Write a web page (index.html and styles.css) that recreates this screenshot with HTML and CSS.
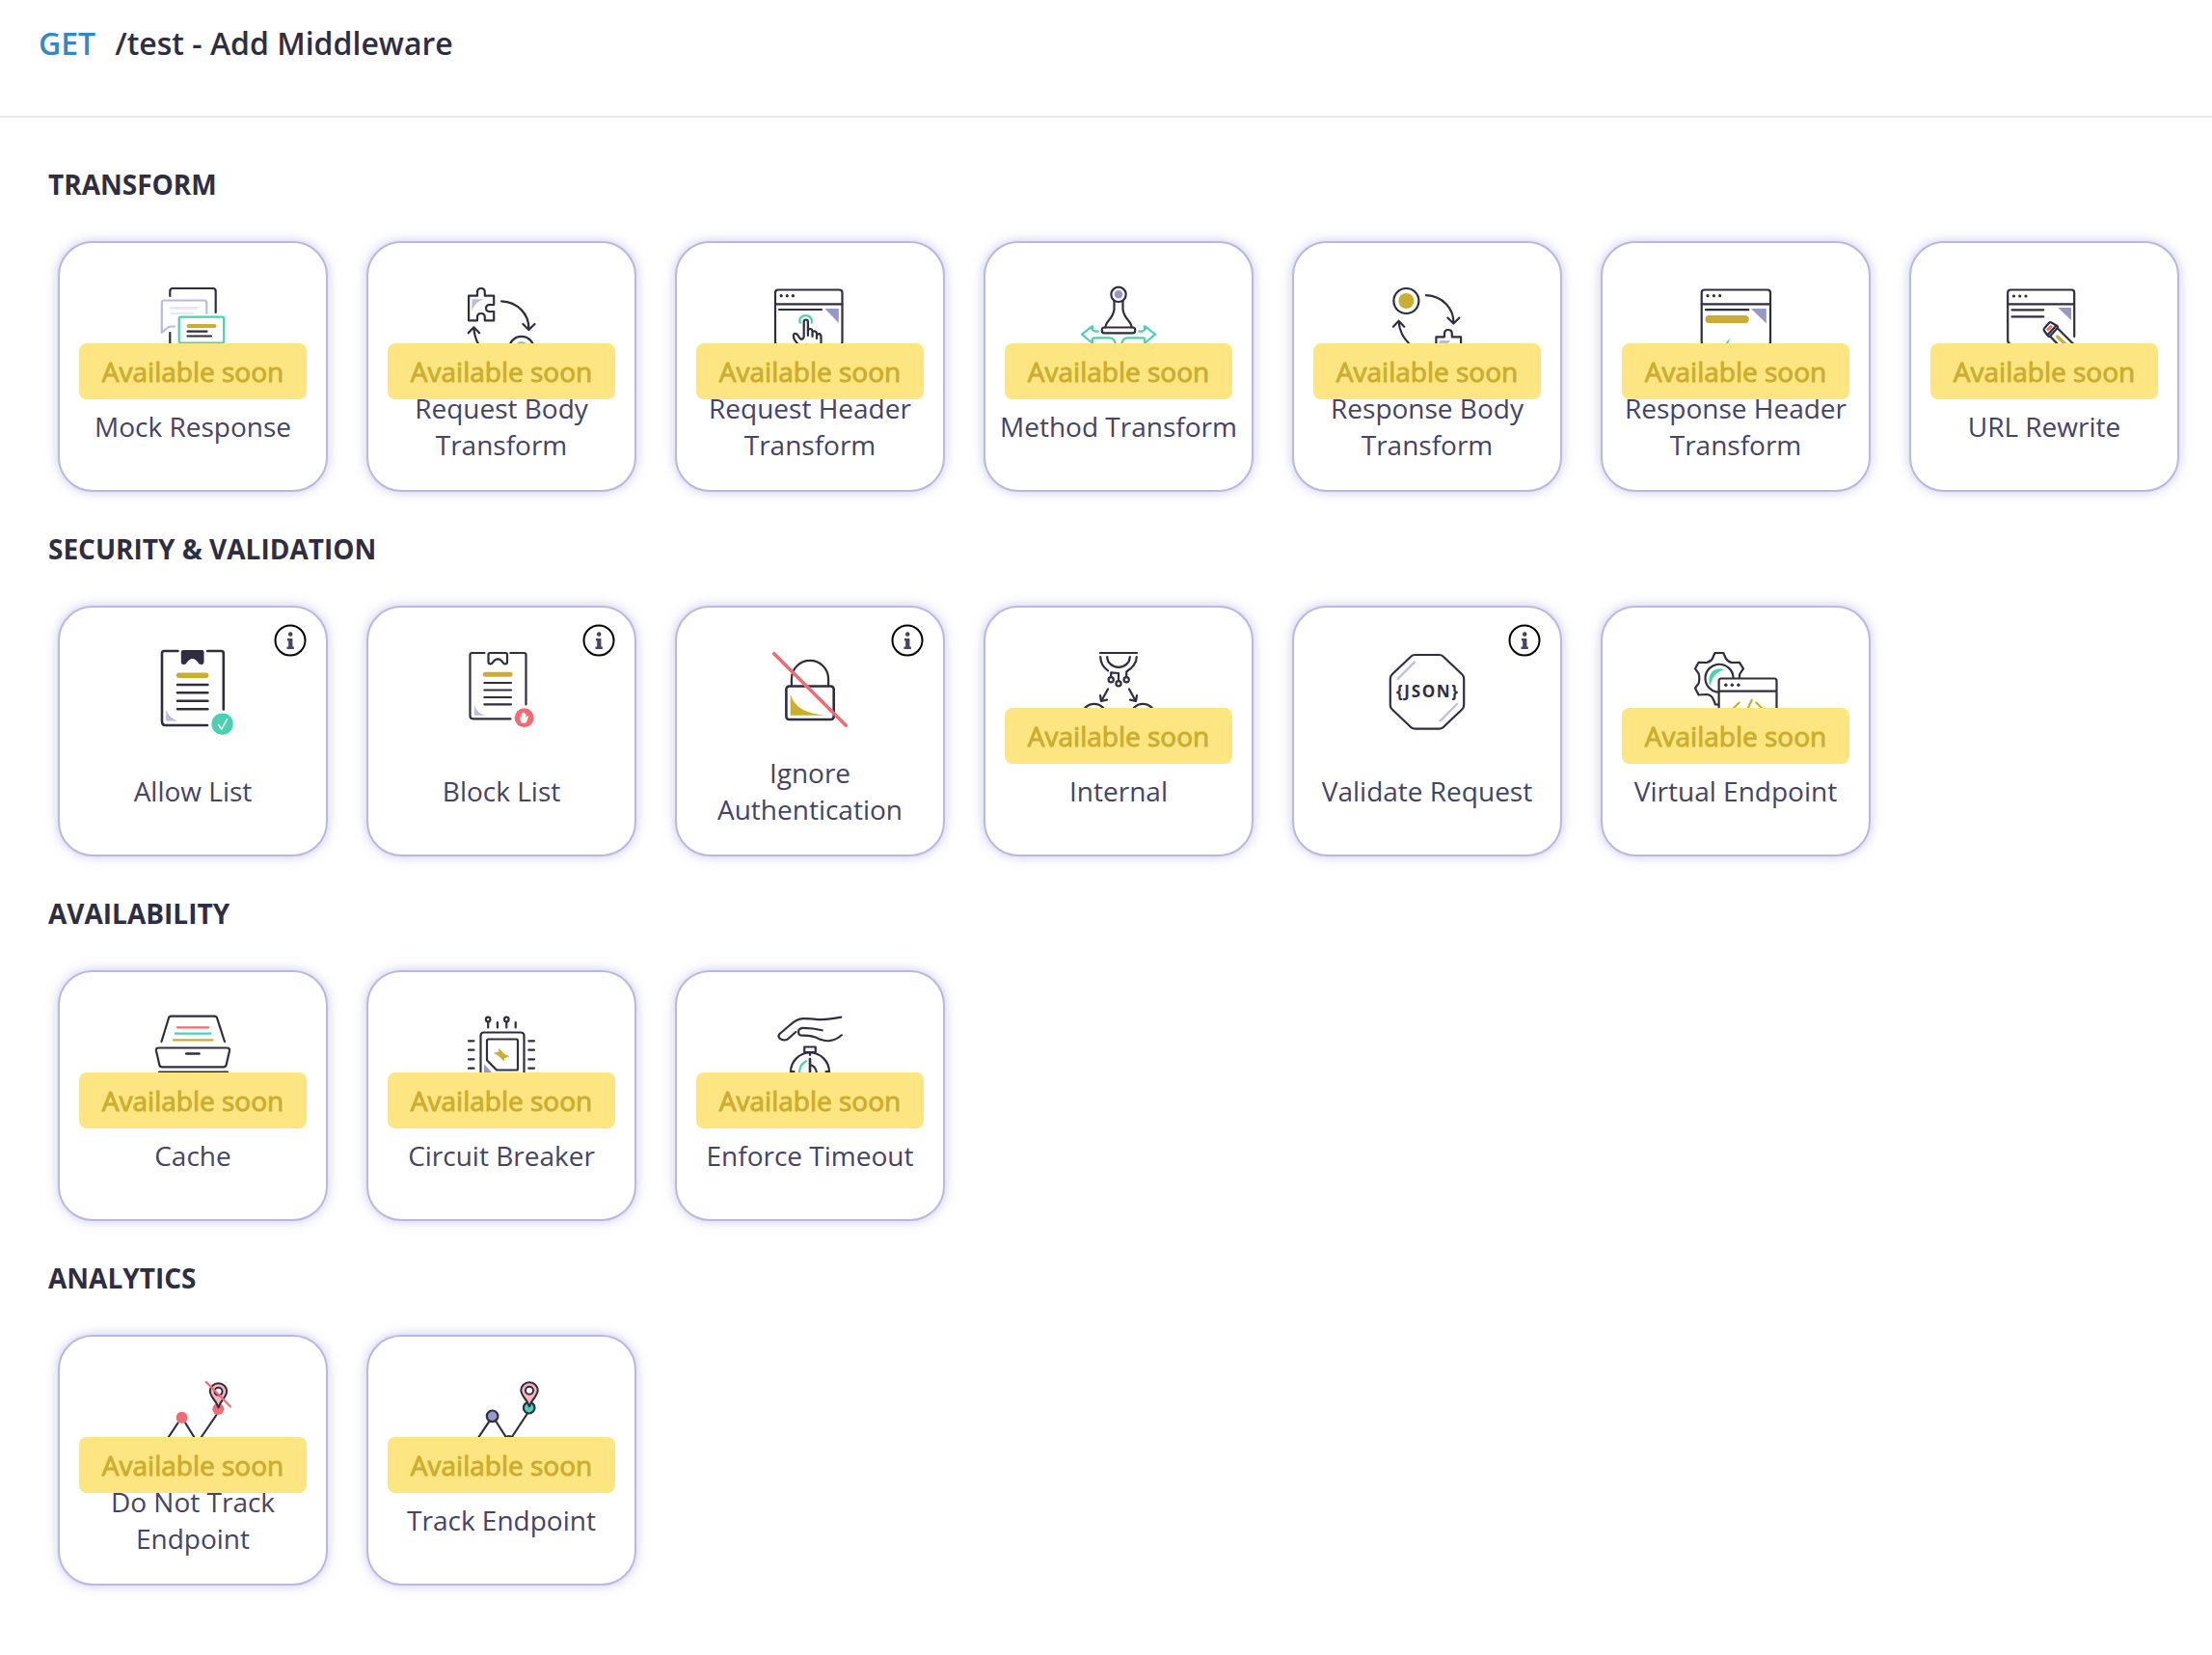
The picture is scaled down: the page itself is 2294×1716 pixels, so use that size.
FILE: index.html
```
<!DOCTYPE html>
<html lang="en">
<head>
<meta charset="utf-8">
<title>Add Middleware</title>
<link rel="stylesheet" href="styles.css">
</head>
<body>
<header class="header">
  <span class="method">GET</span>
  <h1 class="title">/test - Add Middleware</h1>
</header>
<main class="content">
  <section class="section">
    <h2 class="section-title">TRANSFORM</h2>
    <div class="cards">
      <article class="card">
        <svg class="icon" viewBox="90 40 100 100">
          <path class="d" d="M116.3 57V52q0-3 3-3h41.4q3 0 3 3V74M116.3 95v20"/>
          <path class="l" d="M154.3 75V64q0-2.5-2.5-2.5H110.3q-2.5 0-2.5 2.5V95l5-4.500q2-2 4.500-2H121"/>
          <path class="p w28" d="M117.5 69.300H144"/><path class="p" d="M117.500 75H140"/>
          <rect class="g" x="125.7" y="78.7" width="46.5" height="27" rx="2"/>
          <path class="y w40" d="M135.5 88H162.500"/>
          <path class="d" d="M134.5 93.700H154.500M134.500 98.500H159"/>
        </svg>
        <h3 class="label">Mock Response</h3>
        <span class="badge">Available soon</span>
      </article>
      <article class="card">
        <svg class="icon" viewBox="90 40 100 100">
          <path class="fl" d="M109.4 60.300H121.600Q111.500 63.500 109.400 73.300Z"/>
          <path class="d" d="M106.1 56.700H115V53q0-4 3.900-4t3.900 4V56.700H132.200V66H129.500q-5.500-.5-5.500 3.500t5.500 3.500H132.200V82.300H122.800V79q0-4-3.900-4t-3.900 4V82.300H106.100Z"/>
          <path class="d" d="M140 62.300C157 63 169 76 168.400 91.700M162.400 86l6 6 6.100-6M105.700 95.300l5.700-6 5.700 6M111.400 90q.5 9.500 5 17"/>
          <circle class="d" cx="160.8" cy="111.7" r="12.8"/><circle class="fg" cx="160.8" cy="111.7" r="7.5"/>
        </svg>
        <h3 class="label">Request Body Transform</h3>
        <span class="badge">Available soon</span>
      </article>
      <article class="card">
        <svg class="icon" viewBox="90 40 100 100">
          <rect class="d" x="104" y="50.5" width="69.5" height="57" rx="3"/><path class="d" d="M104 65.300H173.500M108 71H152"/>
          <g class="fd"><circle cx="110.2" cy="56.7" r="1.6"/><circle cx="116.3" cy="56.7" r="1.6"/><circle cx="122.4" cy="56.7" r="1.6"/></g>
          <path class="fv" d="M155.5 70H169.800V85Z"/>
          <path class="g" d="M130 84.700q-1.500-2.500 0-4.700 2-2.800 5.500-2.800t5.500 2.800q1.500 2.200.7 4.700"/>
          <path class="d" d="M127.800 107q-4.900-5-4.900-8.500 0-3 2-2.700 2 .2 3.500 3.200 1.800 3.500 3.700 2.500 1.600-.8 1.600-3V83.500q0-2 2.100-2t2.100 2V98M138 93q.3-2.200 2.300-2t2.200 2.200V99M142.500 95q.5-2 2.300-1.700t2.200 2V101M147 98q.7-2 2.400-1.800t2.100 2.500V107"/>
        </svg>
        <h3 class="label">Request Header Transform</h3>
        <span class="badge">Available soon</span>
      </article>
      <article class="card">
        <svg class="icon" viewBox="90 40 100 100">
          <circle class="d" cx="140" cy="55.3" r="7.7"/><circle class="fv" cx="140" cy="55.3" r="4.2"/>
          <path class="d" d="M135.5 62V71Q134.500 77 130 82 126.500 86 126.100 89.500M144.500 62V71Q145.500 77 150 82 153.500 86 153.900 89.500"/>
          <rect class="d" x="122.8" y="89.5" width="34.4" height="5.8" rx="2.5"/>
          <path class="g" d="M118.800 93.700H115.500L113 92V88L102 96.700l11 9.300V102q0-1.700 1.700-1.700H130q6.500 0 6.700 7M161.200 93.700H164.500L167 92V88L178 96.700l-11 9.300V102q0-1.700-1.700-1.700H150q-6.500 0-6.700 7"/>
        </svg>
        <h3 class="label">Method Transform</h3>
        <span class="badge">Available soon</span>
      </article>
      <article class="card">
        <svg class="icon" viewBox="90 40 100 100">
          <circle class="d" cx="118.4" cy="62" r="13"/><circle class="fy" cx="118.4" cy="62" r="8"/>
          <path class="d" d="M139 56.200C156 57 168 70 167.400 85.300M161.400 79.500l6 6 6-6M104.900 88.700l5.700-6 5.700 6M110.600 83.500Q111.500 97 122 107"/>
          <path class="d" d="M149.400 108V99.300H158V96q0-4 3.900-4t3.900 4V99.300H175.100V108"/><path class="fl" d="M152.700 103H164.500L160 108H152.700Z"/>
        </svg>
        <h3 class="label">Response Body Transform</h3>
        <span class="badge">Available soon</span>
      </article>
      <article class="card">
        <svg class="icon" viewBox="90 40 100 100">
          <rect class="d" x="104.7" y="50.5" width="71.3" height="57" rx="3"/><path class="d" d="M104.700 65.300H176M109 71.200H153.300"/>
          <g class="fd"><circle cx="111" cy="56.7" r="1.6"/><circle cx="117.4" cy="56.7" r="1.6"/><circle cx="123.7" cy="56.7" r="1.6"/></g>
          <path class="fv" d="M155.900 70H171.800V85.300Z"/>
          <path class="y w80" d="M112.500 81H149.700"/>
          <path class="fg" d="M135.300 100.500Q129.500 103 130 108L132.500 107Q132 103.500 135.300 100.500Z"/>
        </svg>
        <h3 class="label">Response Header Transform</h3>
        <span class="badge">Available soon</span>
      </article>
      <article class="card">
        <svg class="icon" viewBox="90 40 100 100">
          <path class="d" d="M171.200 99V53.500q0-3-3-3H105.200q-3 0-3 3V103q0 3 3 4M102.200 65.300H171.200M106.500 71.300H139.300M106.500 78.300H139.300"/>
          <g class="fd"><circle cx="108.5" cy="57" r="1.6"/><circle cx="114.7" cy="57" r="1.6"/><circle cx="121" cy="57" r="1.6"/></g>
          <path class="fv" d="M154.300 69H168V82Z"/>
          <path class="d" d="M154 90.500L171 107.500M146.500 99L155 108M147.500 84.500L153.500 88q1 1 .3 2L146 98.500q-1 .8-1.800 0L140 93q-1-1.500.2-2.700L145 84.800q1.200-1.200 2.500-.3ZM143.500 97.200L152.300 87.700"/>
          <path class="y w34" d="M153.700 99L163 108"/><path class="r w30 butt" d="M143 92.500L147.700 87.700"/>
        </svg>
        <h3 class="label">URL Rewrite</h3>
        <span class="badge">Available soon</span>
      </article>
    </div>
  </section>
  <section class="section">
    <h2 class="section-title">SECURITY &amp; VALIDATION</h2>
    <div class="cards">
      <article class="card">
        <svg class="info" viewBox="0 0 34 34"><circle cx="17" cy="17" r="15.5"/><path d="M17.200 8.300a2.300 2.300 0 1 1-.01 0ZM14 14.900h5.400v8.600h1.400v2.600H13.500v-2.600H15.200v-5.900H14Z"/></svg>
        <svg class="icon" viewBox="90 40 100 100">
          <path class="d k" d="M124.500 47H110.300q-2.300 0-2.300 2.300V120q0 4 3.500 4H155M155.200 47H169.500q2.300 0 2.300 2.300V107.500"/>
          <path class="fd" d="M130 46H149.500q2 0 2 2V58q0 3-2.500 3-2.500.3-4-2.500-2.200-3.500-5.400-3.500T134.200 58.500Q132.700 61.300 130.200 61 127.800 61 127.800 58V48q0-2 2.200-2Z"/>
          <path class="y w54" d="M125.500 72.300H153.700"/>
          <path class="d k" d="M124 82H155.400M124 90.300H155.400M124 98.700H155.400M124 107.300H155.400"/>
          <path class="fl" d="M112.200 107.500Q115 117 124.800 119.500H112.200Z"/>
          <circle class="fg" cx="170.6" cy="122.7" r="11.2"/><path class="w" d="M166.500 123.300L169.900 128 175.500 117.500"/>
        </svg>
        <h3 class="label">Allow List</h3>
      </article>
      <article class="card">
        <svg class="info" viewBox="0 0 34 34"><circle cx="17" cy="17" r="15.5"/><path d="M17.200 8.300a2.300 2.300 0 1 1-.01 0ZM14 14.900h5.400v8.600h1.400v2.600H13.500v-2.600H15.200v-5.900H14Z"/></svg>
        <svg class="icon" viewBox="90 40 100 100">
          <path class="d" d="M122.500 49H109.500q-2 0-2 2V114q0 3.300 3 3.300H149.500M149.300 49H163.500q2 0 2 2V102.500"/>
          <path class="d" d="M128 49H144.500q1.500 0 1.500 1.500V58q0 2.500-2 2.500-1.800 0-3-2.200-1.700-3-4.700-3T131.500 58.300Q130.300 60.500 128.500 60.500 126.500 60.500 126.500 58V50.500Q126.500 49 128 49Z"/>
          <path class="y w50" d="M123.300 71.300H149"/>
          <path class="d" d="M122.300 80H150M122.300 87.500H150M122.300 95H150M122.300 102.300H150"/>
          <path class="fl" d="M111.800 103Q114.500 111.500 123 113.700H111.800Z"/>
          <circle class="fr" cx="163.7" cy="116.2" r="10"/>
          <path class="fw" d="M160.700 121.500Q159 117.500 158.900 115.300 160 114.800 160.800 116.300V112q.9-1 1.500 0v-1q.9-1 1.600 0v1q.8-1 1.500 0V116l1.700-1.700q1.300-.3 1 .8L166.500 119.500Q165.500 121.500 165 121.700Z"/>
        </svg>
        <h3 class="label">Block List</h3>
      </article>
      <article class="card">
        <svg class="info" viewBox="0 0 34 34"><circle cx="17" cy="17" r="15.5"/><path d="M17.200 8.300a2.300 2.300 0 1 1-.01 0ZM14 14.900h5.400v8.600h1.400v2.600H13.500v-2.600H15.200v-5.900H14Z"/></svg>
        <svg class="icon" viewBox="90 40 100 100">
          <path class="d" d="M120.900 83V76a19.100 19.100 0 0 1 38.200 0V83"/>
          <rect class="d k" x="115.4" y="83.5" width="49.3" height="34.5" rx="3"/>
          <path class="fy" d="M119.700 92Q126 113 160 113.700H119.700Z"/>
          <path class="r w36" d="M102.700 49.700L177.300 124.300"/>
        </svg>
        <h3 class="label">Ignore Authentication</h3>
      </article>
      <article class="card">
        <svg class="icon" viewBox="90 40 100 100">
          <path class="d" d="M121 49H159M121.200 53Q121.500 62 129 67.300M158.800 53Q158.500 62 148.200 68.500V74M128.200 53a11.800 10.800 0 0 0 23.600 0M132.200 74V69.300L140 70V77.500"/>
          <circle class="d" cx="132.2" cy="76.8" r="2.6"/><circle class="d" cx="140" cy="80.7" r="2.6"/><circle class="d" cx="148.2" cy="76.8" r="2.6"/>
          <path class="d" d="M129 86.500L122.400 98.500M121 93L122 99 128 97.700M151 86.500L157.600 98.500M159 93L158 99 152 97.700"/>
          <circle class="d" cx="114.7" cy="114.7" r="12.8"/><circle class="d" cx="165.3" cy="114.7" r="12.8"/>
        </svg>
        <h3 class="label">Internal</h3>
        <span class="badge">Available soon</span>
      </article>
      <article class="card">
        <svg class="info" viewBox="0 0 34 34"><circle cx="17" cy="17" r="15.5"/><path d="M17.200 8.300a2.300 2.300 0 1 1-.01 0ZM14 14.900h5.400v8.600h1.400v2.600H13.500v-2.600H15.200v-5.900H14Z"/></svg>
        <svg class="icon" viewBox="90 40 100 100">
          <path class="d" d="M127.500 51H152.500q2.500 0 4.300 1.800L176.300 71.200q1.900 1.800 1.900 4.500V103q0 2.700-1.900 4.500L156.800 126q-1.800 1.700-4.300 1.700H127.500q-2.500 0-4.300-1.700L103.700 107.500q-1.900-1.800-1.900-4.500V75.700q0-2.700 1.900-4.500L123.200 52.800Q125 51 127.500 51Z"/>
          <path class="l" d="M127 58.500L109.500 76M171 102L153.500 119.500"/>
          <text class="json" x="108" y="94.5" textLength="64">{JSON}</text>
        </svg>
        <h3 class="label">Validate Request</h3>
      </article>
      <article class="card">
        <svg class="icon" viewBox="90 40 100 100">
          <path class="d" d="M122.400 102.500H119L117 97.500Q115 92.500 110 92L101.600 92.500 98 85.500 101.600 80.700Q103 75.500 101.600 70.300L98 65.300 101.600 58.800 110 59Q115 57.500 116.300 54L118.400 49H127.300L129.500 54Q131 57.500 135.500 59L143.900 58.800 148 65.300 144.500 70.500Q143.700 72 144 74"/>
          <path class="d" d="M137.500 74.500A14.500 14.500 0 1 0 122 89.700"/>
          <path class="fg" d="M128.300 66Q121 63.500 115.500 68.500 109.800 75 114 83.700 114.500 71 128.300 66Z"/>
          <path class="d" d="M122.600 110V78q0-2.500 2.500-2.500H180q2.500 0 2.500 2.500V110M122.600 88.700H182.500"/>
          <g class="fd"><circle cx="129.8" cy="82.3" r="1.7"/><circle cx="136.3" cy="82.3" r="1.7"/><circle cx="142.9" cy="82.3" r="1.7"/></g>
          <path class="y" d="M143.700 100.500L136.500 107.500M156.700 97.700L152 108M161.200 100.500L168.500 107.500"/>
        </svg>
        <h3 class="label">Virtual Endpoint</h3>
        <span class="badge">Available soon</span>
      </article>
    </div>
  </section>
  <section class="section">
    <h2 class="section-title">AVAILABILITY</h2>
    <div class="cards">
      <article class="card">
        <svg class="icon" viewBox="90 40 100 100">
          <path class="d" d="M107.500 74L114.900 49.700Q115.500 47.700 117.500 47.700H162.500Q164.500 47.700 165.100 49.700L173 74M105 105.500H176"/>
          <path class="r" d="M124 59.300H156"/><path class="g" d="M121.800 65.700H158.500"/><path class="y" d="M119.800 72.300H160.500"/>
          <path class="d" d="M104.500 80.500H175.500q3 0 2.500 3L174.700 98q-.5 2.300-3 2.300H108.300q-2.500 0-3-2.300L102 83.500q-.5-3 2.500-3Z"/>
          <path class="d k" d="M133.200 86.500H146.500"/>
        </svg>
        <h3 class="label">Cache</h3>
        <span class="badge">Available soon</span>
      </article>
      <article class="card">
        <svg class="icon" viewBox="90 40 100 100">
          <path class="d" d="M118.500 110V68q0-3.500 3.500-3.500H160q3.500 0 3.500 3.500V110"/>
          <path class="d" d="M125 93.300V73q0-1.500 1.500-1.500H155.500q1.500 0 1.500 1.500V102q0 1.500-1.500 1.500H135.100Z"/>
          <path class="fy" d="M137.300 80.700L143 86.800 148.500 89.300 143 91.300 142.800 94.600 137 88.800 131.700 85.700 137.200 84.500Z"/>
          <path class="fv" d="M122 97.300L131 107H122Z"/>
          <path class="d" d="M106 73.300H111.500M106 82.700H111.500M106 92.300H111.500M106 101.700H111.500M168.300 73.300H174M168.300 82.700H174M168.300 92.300H174M168.300 101.700H174M126.200 53.500V59.500M135.900 54V59.500M145.300 53.500V59.500M154.700 54V59.500"/>
          <circle class="d" cx="126.2" cy="51" r="2.3"/><circle class="d" cx="145.3" cy="51" r="2.3"/>
        </svg>
        <h3 class="label">Circuit Breaker</h3>
        <span class="badge">Available soon</span>
      </article>
      <article class="card">
        <svg class="icon" viewBox="90 40 100 100">
          <path class="d" d="M172.300 48.700Q156 52 146 50.800C135 50 131 49.500 126 52Q122 54 118.500 57.500L108.500 66Q106.500 68 108.500 70.500 112 73.500 116.500 71.800L125.300 64"/>
          <path class="d" d="M152.700 62.300Q143 59.700 132 59.800 128 60.500 128 64T132 67.700C140 67.500 144 68 150 71.500Q155 73.500 160 73.200 167 72.500 172.800 67.300"/>
          <rect class="d" x="134.2" y="79.5" width="11.6" height="5.5"/><circle class="d" cx="140" cy="105.5" r="20"/>
          <path class="d" d="M140 85V88M120 105H123.500M160 105H156.500M140 98Q146.500 99.500 147 107"/><path class="d k" d="M140 92V108"/><path class="g" d="M136 94.300Q129 98 129 107"/>
        </svg>
        <h3 class="label">Enforce Timeout</h3>
        <span class="badge">Available soon</span>
      </article>
    </div>
  </section>
  <section class="section">
    <h2 class="section-title">ANALYTICS</h2>
    <div class="cards">
      <article class="card">
        <svg class="icon" viewBox="90 40 100 100">
          <path class="d" d="M124.500 91.500L113.500 108M132.300 91.500L142.500 108M164.500 83L147.500 108"/>
          <circle class="fr" cx="128.6" cy="85.8" r="6"/><circle class="fr" cx="166.3" cy="77" r="6"/>
          <path class="pin" d="M166.500 75.500Q164.500 70 160.700 65.500 157.800 61 157.800 58.500a8.700 8.200 0 0 1 17.400 0Q175.200 61 172.300 65.500 168.500 70 166.500 75.500Z"/><circle class="hole" cx="166.5" cy="58.8" r="4"/>
          <path class="r" d="M153.700 49L179 74.500"/>
        </svg>
        <h3 class="label">Do Not Track Endpoint</h3>
        <span class="badge">Available soon</span>
      </article>
      <article class="card">
        <svg class="icon" viewBox="90 40 100 100">
          <path class="d" d="M127 90.300L115.500 107.500M134.500 90L145 106.500M167 81.500L150.500 106.500"/><circle class="fd" cx="147.8" cy="110.3" r="6.2"/>
          <circle class="d fv" cx="130.6" cy="84.3" r="5.8"/><circle class="d fg" cx="168.7" cy="75.7" r="5.8"/>
          <path class="pin" d="M169 74.300Q167 69 163.200 64.500 160.300 60 160.300 57.500a8.700 8.200 0 0 1 17.400 0Q177.700 60 174.800 64.500 171 69 169 74.300Z"/><circle class="hole" cx="169" cy="57.7" r="4"/>
        </svg>
        <h3 class="label">Track Endpoint</h3>
        <span class="badge">Available soon</span>
      </article>
    </div>
  </section>
</main>
</body>
</html>
```
FILE: styles.css
```
* { box-sizing: border-box; }
body {
  margin: 0;
  background: #fff;
  color: #2f2d41;
  font-family: "Open Sans", "Noto Sans", sans-serif;
}
.header {
  display: flex;
  gap: 20px;
  height: 122px;
  padding: 23px 40px 0;
  border-bottom: 2px solid #e9e7f6;
  font-size: 32px;
  line-height: 44px;
}
.method { color: #3088c8; font-weight: 600; }
.title { margin: 0; font-size: inherit; font-weight: 600; }
.content { padding: 49px 50px 0; }
.section { height: 378px; }
.section-title {
  margin: 0;
  height: 79px;
  font-size: 28px;
  line-height: 40px;
  font-weight: 700;
}
.cards { display: flex; gap: 40px; padding-left: 10px; }
.card {
  position: relative;
  display: flex;
  flex-direction: column;
  align-items: center;
  flex: 0 0 280px;
  height: 260px;
  padding-top: 38px;
  border: 2px solid #b9b8e0;
  border-radius: 36px;
  background: #fff;
  box-shadow: 0 0 12px rgba(176, 174, 224, .7);
}
.icon { width: 100px; height: 100px; flex: none; }
.label {
  display: flex;
  align-items: center;
  justify-content: center;
  width: 252px;
  height: 104px;
  margin: 0;
  color: #464363;
  font-size: 28px;
  line-height: 38px;
  font-weight: 400;
  text-align: center;
}
.badge {
  position: absolute;
  top: 104px;
  left: 20px;
  width: 236px;
  height: 58px;
  border-radius: 8px;
  background: #fde681;
  color: #cbad2f;
  font-size: 28px;
  line-height: 58px;
  font-weight: 400;
  -webkit-text-stroke: .9px #cbad2f;
  text-align: center;
}
.info { position: absolute; top: 17px; right: 20px; width: 34px; height: 34px; }
.info circle { fill: none; stroke: #000; stroke-width: 2; }
.info path { fill: #464363; }

/* Icon strokes */
.d, .l, .p, .g, .y, .r, .w { fill: none; stroke-width: 2.2px; stroke-linecap: round; stroke-linejoin: round; }
.d { stroke: #2f2d41; }
.l { stroke: #babae2; }
.p { stroke: #e8e6f5; }
.g { stroke: #4bd1b2; }
.y { stroke: #cbad2f; }
.r { stroke: #f26b74; }
.w { stroke: #fff; stroke-width: 1.5px; }
.k { stroke-width: 2.6px; }
.w28 { stroke-width: 2.8px; }
.w30 { stroke-width: 3px; }
.w34 { stroke-width: 3.4px; }
.w36 { stroke-width: 3.6px; }
.w40 { stroke-width: 4px; }
.w50 { stroke-width: 5px; }
.w54 { stroke-width: 5.4px; }
.w80 { stroke-width: 8px; }
.butt { stroke-linecap: butt; }

/* Icon fills */
.fd { fill: #2f2d41; }
.fl { fill: #babae2; }
.fv { fill: #9797c8; }
.fg { fill: #4bd1b2; }
.fy { fill: #cbad2f; }
.fr { fill: #f26b74; }
.fw { fill: #fff; }
.pin { fill: #fab5bb; stroke: #2f2d41; stroke-width: 2; stroke-linejoin: round; }
.hole { fill: #fff; stroke: #2f2d41; stroke-width: 2; }
.json { fill: #2f2d41; font-size: 17px; font-weight: 700; }
```
